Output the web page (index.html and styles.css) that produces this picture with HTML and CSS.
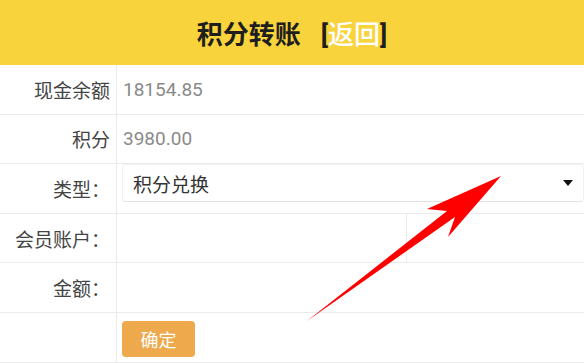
FILE: index.html
```html
<!DOCTYPE html>
<html lang="zh-CN">
<head>
    <meta charset="UTF-8">
    <meta name="viewport" content="width=device-width, initial-scale=1.0">
    <title>积分转账</title>
    <link rel="stylesheet" href="styles.css">
</head>
<body>
    <header class="top-bar">
        <h1>积分转账<span class="back">[<a href="#">返回</a>]</span></h1>
    </header>
    <div class="form">
        <div class="row">
            <div class="label">现金余额</div>
            <div class="value">18154.85</div>
        </div>
        <div class="row">
            <div class="label">积分</div>
            <div class="value">3980.00</div>
        </div>
        <div class="row">
            <div class="label">类型：</div>
            <div class="field">
                <div class="select">
                    <span>积分兑换</span>
                    <span class="caret"></span>
                </div>
            </div>
        </div>
        <div class="row">
            <div class="label">会员账户：</div>
            <div class="field">
                <input type="text" class="input split">
            </div>
        </div>
        <div class="row">
            <div class="label">金额：</div>
            <div class="field">
                <input type="text" class="input">
            </div>
        </div>
        <div class="row">
            <div class="label"></div>
            <div class="field">
                <button class="submit-btn">确定</button>
            </div>
        </div>
    </div>
    <svg class="arrow" width="584" height="363" viewBox="0 0 584 363">
        <polygon points="501,176 427,209 447,211 307,321 455,217 448,237" fill="#ff0000"/>
    </svg>
</body>
</html>
```

FILE: styles.css
```css
:root {
    --yellow: #f9d33b;
    --border: #ebebeb;
    --label: #444;
    --muted: #8a8a8a;
    --orange: #eda94b;
}

body {
    margin: 0;
    font-family: Roboto, "Noto Sans CJK SC", sans-serif;
    background: #fff;
    width: 584px;
    height: 363px;
    overflow: hidden;
    position: relative;
}

.top-bar {
    background: var(--yellow);
    height: 65px;
    display: flex;
    align-items: center;
    justify-content: center;
}

h1 {
    margin: 0;
    font-size: 26px;
    font-weight: 700;
    color: #1e1e1e;
}

.back {
    margin-left: 20px;
}

.back a {
    color: #fff;
    text-decoration: none;
    font-weight: 500;
}

.row {
    display: grid;
    grid-template-columns: 117px 1fr;
    height: 49.6px;
    box-sizing: border-box;
    border-bottom: 1px solid var(--border);
}

.label {
    border-right: 1px solid var(--border);
    padding-right: 6px;
    font-size: 19px;
    color: var(--label);
    display: flex;
    align-items: center;
    justify-content: flex-end;
}

.value {
    display: flex;
    align-items: center;
    padding-left: 6px;
    font-size: 19px;
    color: var(--muted);
}

.field {
    display: flex;
    align-items: center;
    padding-left: 5px;
}

.select {
    align-self: flex-start;
    flex: 1;
    height: 38px;
    box-sizing: border-box;
    border: 1px solid #f1f1f1;
    border-bottom-color: #e2e2e2;
    border-radius: 4px;
    display: flex;
    align-items: center;
    justify-content: space-between;
    padding: 0 10px;
    font-size: 19px;
    color: #333;
}

.caret {
    width: 0;
    height: 0;
    border-left: 5px solid transparent;
    border-right: 5px solid transparent;
    border-top: 6px solid #111;
}

.input {
    border: none;
    outline: none;
    height: 100%;
    margin-left: -5px;
    flex: 1;
    font-size: 18px;
    background: transparent;
}

.input.split {
    flex: none;
    width: 285px;
    border-right: 1px solid var(--border);
}

.submit-btn {
    background: var(--orange);
    color: #fff;
    border: none;
    border-radius: 4px;
    width: 73px;
    height: 36px;
    margin-top: 4px;
    font-size: 18px;
    font-family: "Noto Sans CJK SC", sans-serif;
    padding: 0;
}

.arrow {
    position: absolute;
    top: 0;
    left: 0;
    pointer-events: none;
}
```
